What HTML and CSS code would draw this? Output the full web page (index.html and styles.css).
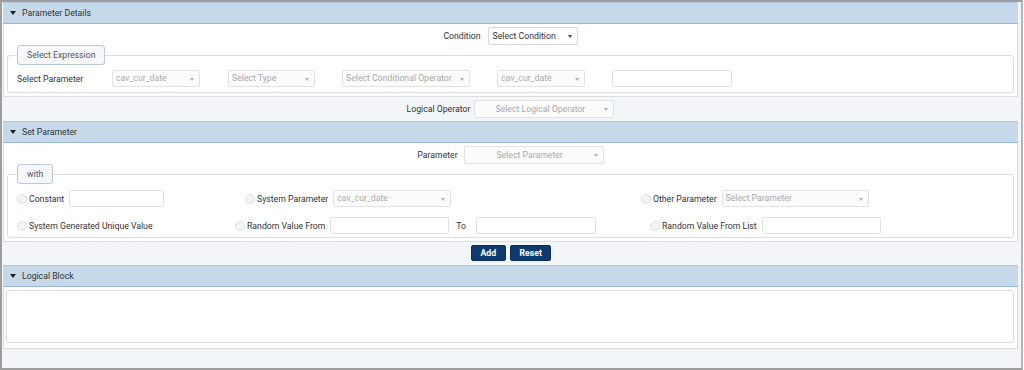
FILE: index.html
```html
<!DOCTYPE html>
<html lang="en">
<head>
    <meta charset="UTF-8">
    <title>Parameter Details</title>
    <link rel="stylesheet" href="styles.css">
</head>
<body>
    <div class="frame">
        <!-- Parameter Details -->
        <div class="section-head"><span class="caret"></span>Parameter Details</div>
        <div class="panel">
            <div class="center-row">
                <span class="label">Condition</span>
                <div class="select active w-condition"><span>Select Condition</span></div>
            </div>
            <fieldset class="group">
                <legend>Select Expression</legend>
                <div class="expr-row">
                    <span class="label expr-label">Select Parameter</span>
                    <div class="select w-88"><span>cav_cur_date</span></div>
                    <div class="select w-87"><span>Select Type</span></div>
                    <div class="select w-128"><span>Select Conditional Operator</span></div>
                    <div class="select w-88"><span>cav_cur_date</span></div>
                    <div class="input w-120"></div>
                </div>
            </fieldset>
        </div>
        <div class="center-row outside gap-4">
            <span class="label">Logical Operator</span>
            <div class="select centered w-140"><span>Select Logical Operator</span></div>
        </div>

        <!-- Set Parameter -->
        <div class="section-head"><span class="caret"></span>Set Parameter</div>
        <div class="panel">
            <div class="center-row gap-6 param-row">
                <span class="label">Parameter</span>
                <div class="select centered w-140"><span>Select Parameter</span></div>
            </div>
            <fieldset class="group with-group">
                <legend>with</legend>
                <div class="with-grid">
                    <div class="opt">
                        <span class="radio"></span><span class="label">Constant</span>
                        <div class="input w-95"></div>
                    </div>
                    <div class="opt shift-10">
                        <span class="radio"></span><span class="label">System Parameter</span>
                        <div class="select w-118"><span>cav_cur_date</span></div>
                    </div>
                    <div class="opt">
                        <span class="radio"></span><span class="label">Other Parameter</span>
                        <div class="select w-147"><span>Select Parameter</span></div>
                    </div>

                    <div class="opt">
                        <span class="radio"></span><span class="label">System Generated Unique Value</span>
                    </div>
                    <div class="opt">
                        <span class="radio"></span><span class="label">Random Value From</span>
                        <div class="input w-119"></div>
                        <span class="label to">To</span>
                        <div class="input w-120"></div>
                    </div>
                    <div class="opt shift-9">
                        <span class="radio"></span><span class="label">Random Value From List</span>
                        <div class="input w-119"></div>
                    </div>
                </div>
            </fieldset>
        </div>
        <div class="actions">
            <button class="btn btn-add">Add</button>
            <button class="btn btn-reset">Reset</button>
        </div>

        <!-- Logical Block -->
        <div class="section-head"><span class="caret"></span>Logical Block</div>
        <div class="panel logic-panel">
            <div class="logic-box"></div>
        </div>
    </div>
</body>
</html>
```

FILE: styles.css
```css
/* === Base === */
* {
    margin: 0;
    padding: 0;
    box-sizing: border-box;
    font-family: Roboto, 'Liberation Sans', sans-serif;
}

body {
    background: #ffffff;
    color: #333333;
    font-size: 8.7px;
}

.frame {
    width: 1023px;
    height: 370px;
    background: #f3f6f9;
    border-top: 2px solid #9e9e9e;
    border-left: 2px solid #9e9e9e;
    border-right: 2px solid #b5b5b5;
    border-bottom: 2px solid #9e9e9e;
    padding: 0 3px 0 1px;
}

/* Section headers */
.section-head {
    height: 22px;
    line-height: 20px;
    background: #c6d9eb;
    border-top: 1px solid #b4cbe2;
    border-bottom: 1px solid #98b6d4;
    color: #333333;
    padding-left: 7px;
    display: flex;
    align-items: center;
}

.caret {
    width: 0;
    height: 0;
    border-left: 3px solid transparent;
    border-right: 3px solid transparent;
    border-top: 4px solid #222;
    margin-right: 6px;
}

.panel {
    background: #ffffff;
    border: 1px solid #dddddd;
    border-top: none;
    padding: 3px 0 3px;
}

/* Rows */
.center-row {
    display: flex;
    justify-content: center;
    align-items: center;
    gap: 7px;
}

.gap-4 { gap: 4px; }
.gap-6 { gap: 6px; }

.outside {
    padding: 3px 0 3px;
}

.label {
    white-space: nowrap;
    color: #333333;
}

/* Fake form controls */
.select,
.input {
    height: 17px;
    background: #fcfcfc;
    border: 1px solid #e2e2e2;
    border-radius: 2px;
    position: relative;
    color: #a9a9a9;
    line-height: 15px;
    padding-left: 3px;
    white-space: nowrap;
    flex-shrink: 0;
}

.input {
    background: #ffffff;
}

.select::after {
    content: '';
    position: absolute;
    right: 5px;
    top: 7px;
    border-left: 2.5px solid transparent;
    border-right: 2.5px solid transparent;
    border-top: 3px solid #b0b0b0;
}

.select.active {
    height: 18px;
    line-height: 16px;
    background: #ffffff;
    border-color: #d6d6d6;
    color: #333333;
    padding-left: 4px;
}

.select.active::after {
    border-top-color: #444;
    right: 5px;
}

.select.centered {
    height: 18px;
    line-height: 16px;
    text-align: center;
    padding-left: 0;
    padding-right: 8px;
}

.w-condition { width: 90px; }
.w-87 { width: 87px; }
.w-88 { width: 88px; }
.w-95 { width: 95px; }
.w-118 { width: 118px; }
.w-119 { width: 119px; }
.w-120 { width: 120px; }
.w-128 { width: 128px; }
.w-140 { width: 140px; }
.w-147 { width: 147px; }

/* Fieldset groups */
.group {
    border: 1px solid #dddddd;
    border-radius: 3px;
    margin: 0 3px;
    padding: 5px 9px 5px;
}

.group legend {
    height: 20px;
    line-height: 18px;
    padding: 0 9px;
    border: 1px solid #b9c7d7;
    border-radius: 3px;
    background: #f6f8fb;
    color: #555555;
}

.expr-row {
    display: flex;
    align-items: center;
    gap: 27px;
}

.expr-label {
    width: 68px;
}

.expr-row .w-87 {
    margin-left: 1px;
}

.with-group {
    margin-top: 0;
    padding-top: 6px;
    padding-bottom: 3px;
}

.with-grid {
    display: grid;
    grid-template-columns: 218px 406px 1fr;
    row-gap: 10px;
}

.opt {
    display: flex;
    align-items: center;
}

.shift-10 { margin-left: 10px; }
.shift-9 { margin-left: 9px; }

.radio {
    width: 10px;
    height: 10px;
    border-radius: 50%;
    border: 1px solid #e0e0e0;
    background: #f4f4f4;
    margin-right: 2px;
    flex-shrink: 0;
}

.opt .label + .input,
.opt .label + .select {
    margin-left: 5px;
}

.opt .to {
    margin: 0 5px 0 7px;
}

/* Buttons */
.actions {
    display: flex;
    justify-content: center;
    gap: 4px;
    padding: 3px 0 4px;
}

.btn {
    height: 16px;
    background: #0d3b70;
    color: #ffffff;
    border: 1px solid #0a2f5a;
    border-radius: 2px;
    font-weight: bold;
    font-size: 8.7px;
    padding: 0 9px;
}

.btn-add { width: 35px; }
.btn-reset { width: 41px; }

/* Logical block */
.logic-panel {
    padding: 3px 3px 5px 2px;
}

.logic-box {
    height: 53px;
    background: #ffffff;
    border: 1px solid #dadada;
    border-radius: 3px;
}
```
